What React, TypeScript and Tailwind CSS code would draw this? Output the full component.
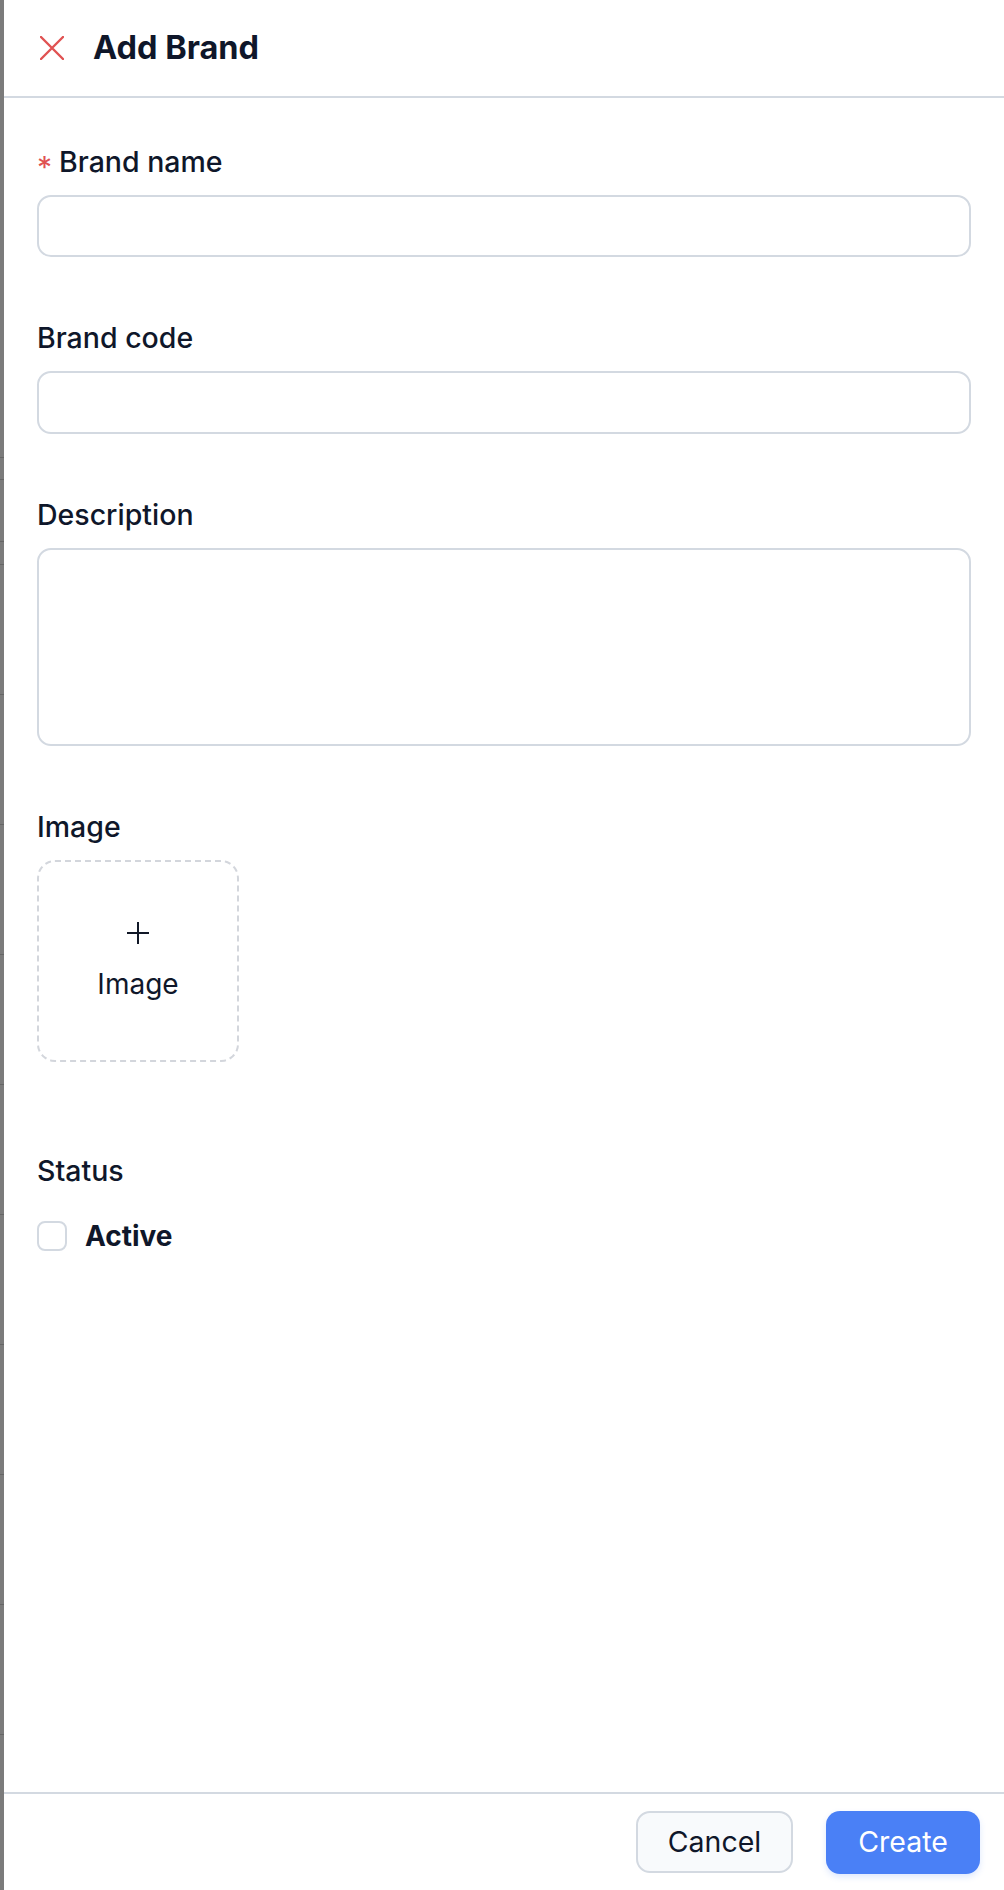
import React from "react";

const backdropRows = [458, 22, 62, 23, 130, 130, 130, 130, 130, 130, 130, 130, 130];

function Label({ text, required }: { text: string; required?: boolean }) {
  return (
    <div className="flex items-center text-[28.5px] leading-[40px] font-medium text-[#0f172a] mb-[13px]">
      {required && (
        <span className="text-[30px] leading-none text-[#e05252] mr-[7px] translate-y-[5px] font-normal">
          *
        </span>
      )}
      {text}
    </div>
  );
}

export default function App() {
  return (
    <div
      className="flex w-[1004px] h-[1890px] bg-white overflow-hidden"
      style={{ fontFamily: "Inter, 'Liberation Sans', sans-serif" }}
    >
      {/* backdrop strip */}
      <div className="w-[4px] h-full bg-[#7b7b7b] flex flex-col">
        {backdropRows.map((h, i) => (
          <div key={i} className="border-b border-[#666666]" style={{ height: h }} />
        ))}
      </div>

      {/* Drawer */}
      <div className="flex-1 flex flex-col h-full">
        <div className="h-[98px] flex items-center pl-[36px] border-b-2 border-[#d3d9e1]">
          <svg width="24" height="24" viewBox="0 0 24 24" className="shrink-0">
            <path d="M1 1L23 23M23 1L1 23" stroke="#e05252" strokeWidth="2.4" strokeLinecap="round" />
          </svg>
          <h1 className="ml-[29px] text-[32.5px] leading-[40px] font-bold text-[#0f172a]">Add Brand</h1>
        </div>

        <div className="flex-1 px-[33px] pt-[44px]">
          <Label text="Brand name" required />
          <div className="h-[62px] rounded-[14px] border-2 border-[#d3d9e1]" />

          <div className="mt-[61px]">
            <Label text="Brand code" />
            <div className="h-[63px] rounded-[14px] border-2 border-[#d3d9e1]" />
          </div>

          <div className="mt-[61px]">
            <Label text="Description" />
            <div className="h-[198px] rounded-[14px] border-2 border-[#d3d9e1]" />
          </div>

          <div className="mt-[61px]">
            <Label text="Image" />
            <div className="w-[202px] h-[202px] rounded-[18px] border-2 border-dashed border-[#d3d6dc] flex flex-col items-center justify-center">
              <svg width="24" height="24" viewBox="0 0 24 24">
                <path d="M12 1V23M1 12H23" stroke="#111827" strokeWidth="2" />
              </svg>
              <span className="mt-[21px] text-[28px] leading-[36px] text-[#0f172a]">Image</span>
            </div>
          </div>

          <div className="mt-[89px]">
            <div className="text-[28.5px] leading-[40px] font-medium text-[#0f172a]">Status</div>
            <label className="mt-[27px] flex items-center">
              <span className="w-[30px] h-[30px] rounded-[8px] border-2 border-[#d3d9e1] bg-white" />
              <span className="ml-[18px] text-[28px] leading-[36px] font-bold text-[#0f172a]">Active</span>
            </label>
          </div>
        </div>

        <div className="h-[98px] border-t-2 border-[#d3d9e1] flex items-center justify-end gap-[33px] pr-[24px]">
          <button className="h-[62px] w-[157px] rounded-[14px] border-2 border-[#d3d9e1] bg-[#f8fafc] text-[28.5px] text-[#0f172a]">
            Cancel
          </button>
          <button className="h-[63px] w-[154px] rounded-[14px] bg-[#4a80f6] text-[28.5px] text-white shadow-[0_3px_6px_rgba(74,128,246,0.18)]">
            Create
          </button>
        </div>
      </div>
    </div>
  );
}
